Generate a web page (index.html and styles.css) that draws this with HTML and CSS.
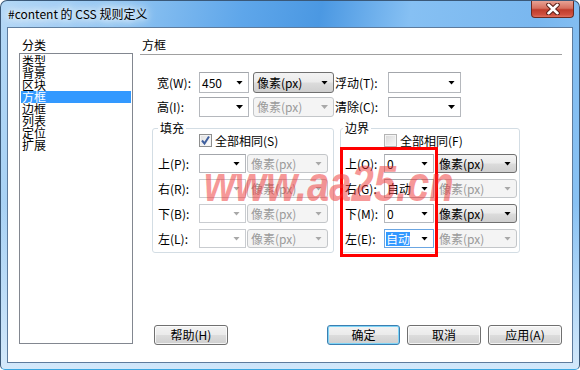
FILE: index.html
```html
<!DOCTYPE html>
<html lang="zh-CN">
<head>
    <meta charset="UTF-8">
    <meta name="viewport" content="width=device-width, initial-scale=1.0">
    <title>#content 的 CSS 规则定义</title>
    <link rel="stylesheet" href="styles.css">
</head>
<body>
<div class="window">
    <div class="titlebar">
        <span class="title">#content 的 CSS 规则定义</span>
        <button class="close" type="button">
            <svg width="16" height="12" viewBox="0 0 16 12">
                <path d="M3.5 1.8 L12.5 10.2 M12.5 1.8 L3.5 10.2" stroke="#5a1f18" stroke-width="4.6" stroke-linecap="round"/>
                <path d="M3.5 1.8 L12.5 10.2 M12.5 1.8 L3.5 10.2" stroke="#fff" stroke-width="2.6" stroke-linecap="round"/>
            </svg>
        </button>
    </div>
    <div class="client">
        <div class="sidebar">
            <div class="cap">分类</div>
            <ul class="cats">
                <li>类型</li>
                <li>背景</li>
                <li>区块</li>
                <li class="sel">方框</li>
                <li>边框</li>
                <li>列表</li>
                <li>定位</li>
                <li>扩展</li>
            </ul>
        </div>
        <div class="main">
            <div class="head">方框</div>
            <div class="toprows">
                <span class="lbl">宽(W):</span>
                <div class="combo w50"><span>450</span><i class="arr"></i></div>
                <div class="unit w81"><span>像素(px)</span><i class="arr"></i></div>
                <span class="lbl">浮动(T):</span>
                <div class="combo w73"><span></span><i class="arr"></i></div>

                <span class="lbl">高(I):</span>
                <div class="combo w50"><span></span><i class="arr"></i></div>
                <div class="unit w81 off"><span>像素(px)</span><i class="arr"></i></div>
                <span class="lbl">清除(C):</span>
                <div class="combo w73"><span></span><i class="arr"></i></div>
            </div>
            <div class="groups">
                <div class="grp pad">
                    <div class="legend">填充</div>
                    <div class="same"><span class="chk on"><svg width="11" height="11" viewBox="0 0 11 11"><path d="M2 5.5 L4.5 8.5 L9 1.5" fill="none" stroke="#3f5f9e" stroke-width="2"/></svg></span>全部相同(S)</div>
                    <div class="rows">
                        <span class="lbl">上(P):</span>
                        <div class="combo"><span></span><i class="arr"></i></div>
                        <div class="unit off"><span>像素(px)</span><i class="arr"></i></div>
                        <span class="lbl">右(R):</span>
                        <div class="combo off"><span></span><i class="arr"></i></div>
                        <div class="unit off"><span>像素(px)</span><i class="arr"></i></div>
                        <span class="lbl">下(B):</span>
                        <div class="combo off"><span></span><i class="arr"></i></div>
                        <div class="unit off"><span>像素(px)</span><i class="arr"></i></div>
                        <span class="lbl">左(L):</span>
                        <div class="combo off"><span></span><i class="arr"></i></div>
                        <div class="unit off"><span>像素(px)</span><i class="arr"></i></div>
                    </div>
                </div>
                <div class="grp mar">
                    <div class="legend">边界</div>
                    <div class="same"><span class="chk"></span>全部相同(F)</div>
                    <div class="rows">
                        <span class="lbl">上(O):</span>
                        <div class="combo"><span>0</span><i class="arr"></i></div>
                        <div class="unit"><span>像素(px)</span><i class="arr"></i></div>
                        <span class="lbl">右(G):</span>
                        <div class="combo"><span>自动</span><i class="arr"></i></div>
                        <div class="unit off"><span>像素(px)</span><i class="arr"></i></div>
                        <span class="lbl">下(M):</span>
                        <div class="combo"><span>0</span><i class="arr"></i></div>
                        <div class="unit"><span>像素(px)</span><i class="arr"></i></div>
                        <span class="lbl">左(E):</span>
                        <div class="combo focus"><span class="hl">自动</span><i class="arr"></i></div>
                        <div class="unit off"><span>像素(px)</span><i class="arr"></i></div>
                    </div>
                </div>
            </div>
            <div class="buttons">
                <button class="btn help" type="button">帮助(H)</button>
                <button class="btn ok" type="button">确定</button>
                <button class="btn" type="button">取消</button>
                <button class="btn" type="button">应用(A)</button>
            </div>
        </div>
    </div>
    <div class="redbox"></div>
    <div class="watermark">www.aa25.cn</div>
</div>
</body>
</html>
```

FILE: styles.css
```css
* {
    box-sizing: border-box;
}
html, body {
    margin: 0;
    padding: 0;
}
body {
    width: 580px;
    height: 370px;
    overflow: hidden;
    font-family: "Noto Sans CJK SC", sans-serif;
    font-size: 12px;
    color: #000;
}
.window {
    position: relative;
    width: 580px;
    height: 370px;
    border: 1px solid #3a5878;
    border-bottom-color: #3aa6e0;
    border-radius: 7px 7px 5px 5px;
    background:
        linear-gradient(180deg, rgba(255, 255, 255, 0) 55%, rgba(214, 234, 251, 0.95) 100%),
        linear-gradient(100deg, #b4d8f6 0%, #93c6f2 18%, #5ea6ea 38%, #4b98e2 50%, #86c0f3 64%, #79b7ef 84%, #8fc6f5 100%);
    overflow: hidden;
}
.titlebar {
    height: 26px;
    display: flex;
    align-items: flex-start;
}
.title {
    padding: 6px 0 0 7px;
    line-height: 14px;
    font-family: "Noto Sans CJK SC", "Liberation Sans", sans-serif;
    font-size: 12px;
    text-shadow: 0 0 6px #fff, 0 0 10px #fff, 0 0 14px #eaf4fd;
}
.close {
    margin-left: auto;
    margin-right: 5px;
    width: 43px;
    height: 17px;
    padding: 0;
    border: 1px solid #6b2a22;
    border-top: none;
    border-radius: 0 0 4px 4px;
    background: linear-gradient(180deg, #e7a294 0%, #d6705f 45%, #bf3c2b 55%, #cf4f3e 85%, #e0705e 100%);
    display: flex;
    align-items: center;
    justify-content: center;
}
.client {
    margin: 0 6px;
    height: 336px;
    background: #fff;
    border: 1px solid #5d7b9d;
    display: flex;
    padding: 9px 0 0 11px;
}
.sidebar {
    width: 114px;
}
.cap {
    line-height: 16px;
    padding-left: 3px;
}
.cats {
    list-style: none;
    margin: 0;
    padding: 1px;
    height: 291px;
    border: 1px solid #828790;
}
.cats li {
    height: 12px;
    line-height: 12px;
    padding-left: 1px;
}
.cats li.sel {
    background: #3399ff;
    color: #fff;
}
.main {
    width: 422px;
    margin-left: 7px;
}
.head {
    line-height: 16px;
    padding: 0 0 1px 2px;
    border-bottom: 1px solid #a0a0a0;
}
.lbl {
    white-space: nowrap;
    line-height: 14px;
}
.toprows {
    display: grid;
    grid-template-columns: 42px 54px 82px 53px 73px;
    grid-template-rows: 21px 20px;
    row-gap: 4px;
    align-items: center;
    margin-top: 17px;
    padding-left: 17px;
}
.toprows .combo, .toprows .unit {
    height: 100%;
}
.w50 { width: 50px; }
.w73 { width: 73px; }
.w81 { width: 81px; }

.combo, .unit {
    display: flex;
    align-items: center;
    justify-content: space-between;
    padding: 0 5px 0 2px;
    line-height: 14px;
    white-space: nowrap;
}
.combo {
    background: #fff;
    border: 1px solid #b5b8bd;
    border-top-color: #a3a6ab;
}
.combo.off {
    border-color: #c9ccd0;
}
.combo.focus {
    border-color: #6ba6e2;
    padding-left: 1px;
}
.hl {
    background: #3399ff;
    color: #fff;
}
.unit {
    border: 1px solid #707070;
    border-radius: 3px;
    background: linear-gradient(180deg, #f3f3f3 0%, #ebebeb 48%, #dcdcdc 52%, #cfcfcf 100%);
    padding-left: 3px;
}
.unit.off {
    border-color: #c3c6c9;
    background: #f4f4f4;
    color: #9a9a9a;
}
.arr {
    width: 7px;
    height: 4px;
    background: #000;
    clip-path: polygon(0 0, 100% 0, 50% 100%);
    flex: none;
}
.combo.off .arr, .unit.off .arr {
    background: #a8a8a8;
}
.groups {
    display: flex;
    margin-top: 11px;
    margin-left: 12px;
    gap: 6px;
}
.grp {
    border: 1px solid #d3dde4;
    border-radius: 3px;
    padding-bottom: 4px;
}
.grp.pad {
    width: 182px;
}
.grp.mar {
    width: 180px;
}
.legend {
    width: fit-content;
    margin: -8px 0 0 5px;
    padding: 0 2px;
    line-height: 14px;
    background: #fff;
}
.grp.mar .legend {
    margin-left: 2px;
}
.same {
    display: flex;
    align-items: center;
    gap: 3px;
    height: 13px;
    margin-top: -1px;
    line-height: 13px;
}
.pad .same {
    padding-left: 46px;
}
.mar .same {
    padding-left: 43px;
}
.chk {
    width: 13px;
    height: 13px;
    border: 1px solid #8e8f8f;
    background: linear-gradient(135deg, #dedede 0%, #f6f6f6 70%, #fff 100%);
    box-shadow: inset 0 0 0 1px #f4f4f4;
    display: flex;
    align-items: center;
    justify-content: center;
}
.chk:not(.on) {
    border-color: #b4b4b4;
    background: linear-gradient(135deg, #d8d8d8 0%, #ececec 60%, #f6f6f6 100%);
}
.rows {
    display: grid;
    grid-template-rows: repeat(4, 19px);
    row-gap: 6px;
    align-items: center;
    margin-top: 7px;
}
.rows .combo, .rows .unit {
    height: 19px;
}
.pad .rows {
    grid-template-columns: 41px 48px 81px;
    padding-left: 5px;
}
.pad .rows .combo { width: 47px; }
.pad .rows .unit { width: 81px; }
.mar .rows {
    grid-template-columns: 39px 51px 82px;
    padding-left: 4px;
}
.mar .rows .combo { width: 50px; }
.mar .rows .unit { width: 82px; }

.buttons {
    display: flex;
    gap: 7px;
    margin-top: 72px;
    padding-left: 14px;
}
.btn {
    width: 74px;
    height: 20px;
    padding: 0;
    border: 1px solid #707070;
    border-radius: 3px;
    background: linear-gradient(180deg, #f3f3f3 0%, #ebebeb 48%, #dcdcdc 52%, #cfcfcf 100%);
    box-shadow: inset 0 0 0 1px rgba(255, 255, 255, 0.75);
    font-family: "Noto Sans CJK SC", sans-serif;
    font-size: 12px;
    line-height: 14px;
    color: #000;
}
.btn.ok {
    margin-left: auto;
    width: 73px;
    border-color: #3c7fb1;
    box-shadow: inset 0 0 0 1px #7fd4f6;
}
.redbox {
    position: absolute;
    left: 339px;
    top: 146px;
    width: 98px;
    height: 110px;
    border: 3px solid #ff0000;
}
.watermark {
    position: absolute;
    left: 203px;
    top: 151px;
    font-family: "Liberation Sans", sans-serif;
    font-weight: bold;
    font-style: italic;
    font-size: 40px;
    line-height: 50px;
    color: rgba(238, 50, 50, 0.5);
    transform: scaleY(1.25);
    transform-origin: left top;
    pointer-events: none;
}
```
